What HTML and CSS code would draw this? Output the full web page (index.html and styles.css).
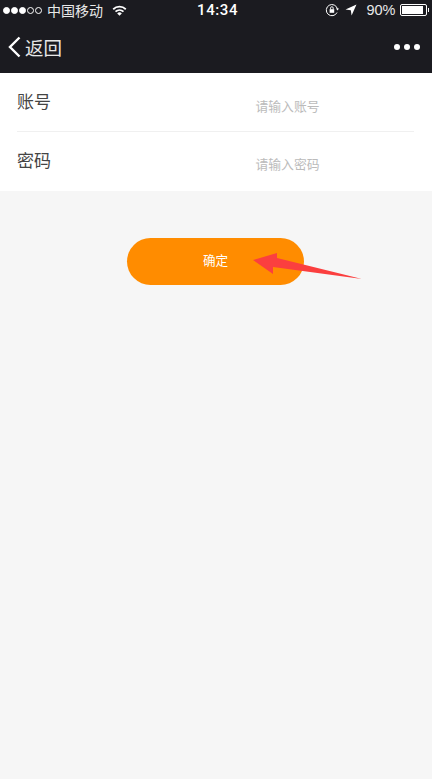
FILE: index.html
```html
<!DOCTYPE html>
<html>

<head>
  <meta charset="utf-8">
  <title>账号</title>
  <link rel="stylesheet" href="styles.css">
</head>

<body>
  <div class="top">
    <div class="status">
      <div class="status-left">
        <span class="signal"><i class="on"></i><i class="on"></i><i class="on"></i><i></i><i></i></span>
        <span class="carrier">中国移动</span>
        <svg class="wifi" width="15" height="11" viewBox="0 0 15 11">
          <path d="M0.6 3.6A10 10 0 0 1 14.4 3.6L13.2 4.9A8.2 8.2 0 0 0 1.8 4.9Z" fill="#fff" />
          <path d="M2.9 6A6.7 6.7 0 0 1 12.1 6L10.9 7.3A5 5 0 0 0 4.1 7.3Z" fill="#fff" />
          <path d="M5.2 8.4A3.3 3.3 0 0 1 9.8 8.4L7.5 10.8Z" fill="#fff" />
        </svg>
      </div>
      <div class="time">14:34</div>
      <div class="status-right">
        <svg class="lock" width="14" height="14" viewBox="0 0 14 14">
          <path d="M12 9.5A5.6 5.6 0 1 1 12.4 6" fill="none" stroke="#fff" stroke-width="1" />
          <path d="M11 5.4h3l-1.5 2z" fill="#fff" />
          <rect x="4.6" y="6.2" width="4.6" height="3.6" fill="#fff" />
          <path d="M5.6 6.2V5a1.3 1.3 0 0 1 2.6 0v1.2" fill="none" stroke="#fff" stroke-width="0.9" />
        </svg>
        <svg class="arrow-loc" width="12" height="12" viewBox="0 0 12 12">
          <path d="M11.5 0.5L0.5 5.4L5.8 6.3L6.6 11.5Z" fill="#fff" />
        </svg>
        <span class="percent">90%</span>
        <span class="battery"><span class="battery-fill"></span></span>
        <span class="battery-tip"></span>
      </div>
    </div>
    <div class="nav">
      <div class="back">
        <svg width="13" height="22" viewBox="0 0 13 22">
          <path d="M11.5 1.5L2 11L11.5 20.5" fill="none" stroke="#fff" stroke-width="2.4" />
        </svg>
        <span>返回</span>
      </div>
      <div class="dots"><i></i><i></i><i></i></div>
    </div>
  </div>

  <div class="form">
    <div class="row row-first">
      <span class="label">账号</span>
      <span class="hint">请输入账号</span>
    </div>
    <div class="row row-second">
      <span class="label">密码</span>
      <span class="hint">请输入密码</span>
    </div>
  </div>

  <div class="actions">
    <button class="ok">确定</button>
    <!-- red arrow drawn over the button -->
    <svg class="mark" width="112" height="36" viewBox="0 0 112 36">
      <path d="M1 11L25 4L25 9L110 30L21 18L21 25Z" fill="#fb3f3f" />
    </svg>
  </div>
</body>

</html>
```

FILE: styles.css
```css
html,
body {
  margin: 0;
  height: 100%;
}

body {
  width: 432px;
  height: 779px;
  overflow: hidden;
  background-color: #f6f6f6;
  font-family: "Liberation Sans", "Noto Sans CJK SC", sans-serif;
}

.top {
  height: 73px;
  background-color: #1b1b20;
  color: #ffffff;
}

.status {
  height: 20px;
  display: flex;
  justify-content: space-between;
  align-items: center;
  position: relative;
  font-size: 14px;
}

.status-left {
  display: flex;
  align-items: center;
  padding-left: 3px;
}

.signal {
  display: flex;
  gap: 1px;
}

.signal i {
  width: 5px;
  height: 5px;
  border: 1px solid #ffffff;
  border-radius: 50%;
}

.signal .on {
  background-color: #ffffff;
}

.carrier {
  margin-left: 5px;
  color: #e8e8e8;
}

.wifi {
  margin-left: 9px;
}

.time {
  position: absolute;
  left: 197px;
  top: 1px;
  font-size: 15px;
  font-weight: 500;
  font-family: "Roboto", sans-serif;
  letter-spacing: 0.6px;
}

.status-right {
  display: flex;
  align-items: center;
  padding-right: 3px;
}

.lock {
  margin-right: 6px;
}

.arrow-loc {
  margin-right: 9px;
}

.percent {
  font-size: 14.5px;
  color: #e8e8e8;
  margin-right: 4px;
}

.battery {
  width: 23px;
  height: 8px;
  border: 1px solid #ffffff;
  border-radius: 2px;
  padding: 1px;
  display: block;
}

.battery-fill {
  display: block;
  width: 21px;
  height: 8px;
  background-color: #ffffff;
}

.battery-tip {
  width: 1.5px;
  height: 4px;
  margin-left: 1px;
  background-color: #ffffff;
}

.nav {
  height: 54px;
  display: flex;
  justify-content: space-between;
  align-items: center;
  padding: 0 12px 0 8px;
}

.back {
  display: flex;
  align-items: center;
  gap: 4px;
  font-size: 18.5px;
  color: #e8e8e8;
}

.dots {
  display: flex;
  gap: 4px;
}

.dots i {
  width: 6px;
  height: 6px;
  border-radius: 50%;
  background-color: #ffffff;
}

.form {
  height: 118px;
  background-color: #ffffff;
  padding: 0 18px 0 17px;
}

.row {
  height: 59px;
  box-sizing: border-box;
  display: flex;
  align-items: center;
}

.row-first {
  border-bottom: 1px solid #f0f0f0;
}

.label {
  font-size: 17px;
  color: #444444;
  margin-top: -3px;
}

.hint {
  margin-left: 204.5px;
  margin-top: 7px;
  font-size: 12.8px;
  color: #bbbbbb;
}

.row-second .label {
  margin-top: -5px;
}

.row-second .hint {
  margin-top: 4px;
}

.actions {
  position: relative;
  padding: 47px 0 0 127px;
}

.ok {
  display: block;
  width: 177px;
  height: 47px;
  border: none;
  border-radius: 24px;
  background-color: #ff8c00;
  color: #ffffff;
  font-family: inherit;
  font-size: 12.6px;
  padding: 0 0 4px 0;
}

.mark {
  position: absolute;
  left: 252px;
  top: 58px;
}
```
